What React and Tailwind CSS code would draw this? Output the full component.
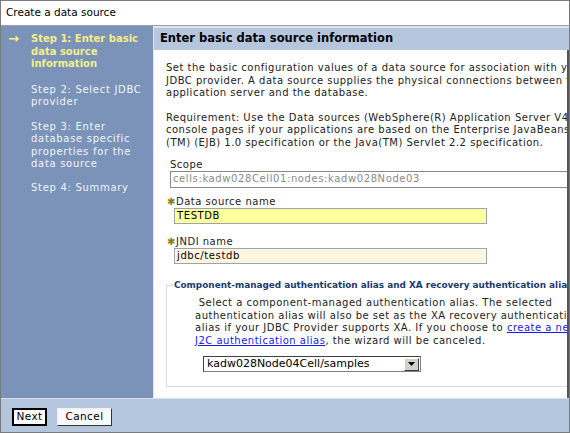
import React from "react";

const font = "font-['DejaVu_Sans',Verdana,sans-serif]";

const Field = ({ label, value, bg, gap }) => (
  <div className={gap}>
    <div className="flex items-center h-[12px]">
      <span className="w-[10px] pl-[1px] text-[#8a7a1a] text-[10px] leading-none">✱</span>
      <span>{label}</span>
    </div>
    <div
      className={`ml-[8px] w-[313px] h-[16px] border border-[#9aa4ad] ${bg} px-[2px] flex items-center text-black tracking-[0.6px]`}
    >
      {value}
    </div>
  </div>
);

export default function App() {
  return (
    <div
      className={`w-[570px] h-[433px] flex flex-col overflow-hidden bg-white border border-[#7a7a7a] ${font} text-[10px] text-[#222]`}
    >
      {/* title */}
      <div className="h-[25px] shrink-0 flex items-center px-[5px] text-[10.5px] text-black border-b border-[#9aa0a8]">
        Create a data source
      </div>

      <div className="flex-1 flex min-h-0">
        {/* steps */}
        <div className="w-[152px] shrink-0 bg-[#7b93b8] pt-[7px] text-[10px] leading-[12.5px] tracking-[0.7px] text-[#f2f5fa]">
          <div className="flex">
            <span className="w-[30px] pl-[7px] text-[#f3ef8a] text-[13px] leading-[12px] font-bold">→</span>
            <span className="font-bold text-[#f3ef8a] tracking-[0px] w-[115px]">
              Step 1: Enter basic data source information
            </span>
          </div>
          <div className="pl-[30px] mt-[13px] w-[150px]">Step 2: Select JDBC provider</div>
          <div className="pl-[30px] mt-[12px] w-[142px]">
            Step 3: Enter database specific properties for the data source
          </div>
          <div className="pl-[30px] mt-[11px]">Step 4: Summary</div>
        </div>

        {/* main */}
        <div className="flex-1 min-w-0 flex flex-col bg-[#dfe6ef] pt-[2px] pl-[1px]">
          <div className="h-[22px] shrink-0 bg-[#b6c7dd] flex items-center pl-[6px] text-[11.5px] font-bold text-black whitespace-nowrap">
            Enter basic data source information
          </div>
          <div className="flex-1 min-h-0 bg-white border-r-2 border-[#555] pl-[12px] pt-[12px] leading-[12.5px] tracking-[0.5px] whitespace-nowrap overflow-hidden">
            <p>
              Set the basic configuration values of a data source for association with your
              <br />
              JDBC provider. A data source supplies the physical connections between the
              <br />
              application server and the database.
            </p>
            <p className="mt-[12px]">
              Requirement: Use the Data sources (WebSphere(R) Application Server V4)
              <br />
              console pages if your applications are based on the Enterprise JavaBeans
              <br />
              (TM) (EJB) 1.0 specification or the Java(TM) Servlet 2.2 specification.
            </p>

            <div className="mt-[10px] pl-[4px]">
              <div className="h-[12px] leading-[12px]">Scope</div>
              <div className="h-[17px] w-[420px] border border-[#8a8a8a] flex items-center px-[2px] text-[#8a8a8a] tracking-[0.6px]">
                cells:kadw028Cell01:nodes:kadw028Node03
              </div>
            </div>

            <Field gap="mt-[8px]" label="Data source name" value="TESTDB" bg="bg-[#ffff9c]" />
            <Field gap="mt-[12px]" label="JNDI name" value="jdbc/testdb" bg="bg-[#fff6e0]" />

            <div className="relative mt-[21px] w-[440px] h-[102px] border border-[#dcdcdc]">
              <div className="absolute -top-[7px] left-[6px] bg-white px-[1px] text-[8.9px] tracking-[0px] font-bold text-[#1c3a6e] leading-[12px]">
                Component-managed authentication alias and XA recovery authentication alias
              </div>
              <div className="pl-[28px] pt-[11px] leading-[12.5px]">
                <p>
                  &nbsp;Select a component-managed authentication alias. The selected
                  <br />
                  authentication alias will also be set as the XA recovery authentication
                  <br />
                  alias if your JDBC Provider supports XA. If you choose to{" "}
                  <span className="text-[#1a1aee] underline">create a new</span>
                  <br />
                  <span className="text-[#1a1aee] underline">J2C authentication alias</span>, the wizard will be canceled.
                </p>
                <div className="mt-[9px] ml-[8px] w-[218px] h-[16px] border border-[#7f7f7f] border-t-[#404040] border-l-[#404040] flex items-center bg-white">
                  <span className="flex-1 pl-[3px] text-[11px] tracking-[0px] text-black">
                    kadw028Node04Cell/samples
                  </span>
                  <span className="w-[15px] h-[13px] mr-[1px] bg-[#d4d0c8] border border-[#fff] border-r-[#404040] border-b-[#404040] flex items-center justify-center">
                    <svg width="7" height="4" viewBox="0 0 7 4">
                      <path d="M0 0h7L3.5 4z" fill="#000" />
                    </svg>
                  </span>
                </div>
              </div>
            </div>
          </div>
        </div>
      </div>

      {/* buttons */}
      <div className="h-[34px] shrink-0 bg-[#b4c6dd] border-t border-[#d8e2ee] flex items-center gap-[10px] pl-[11px] pt-[2px]">
        <button className="h-[18px] w-[35px] bg-white border-2 border-black text-[10.5px] tracking-[0.4px] text-black leading-none">
          Next
        </button>
        <button className="h-[18px] w-[55px] bg-[#f7f9fc] border border-[#eef] border-r-[#333] border-b-[#333] text-[10.5px] tracking-[0.4px] text-black leading-none">
          Cancel
        </button>
      </div>
    </div>
  );
}
